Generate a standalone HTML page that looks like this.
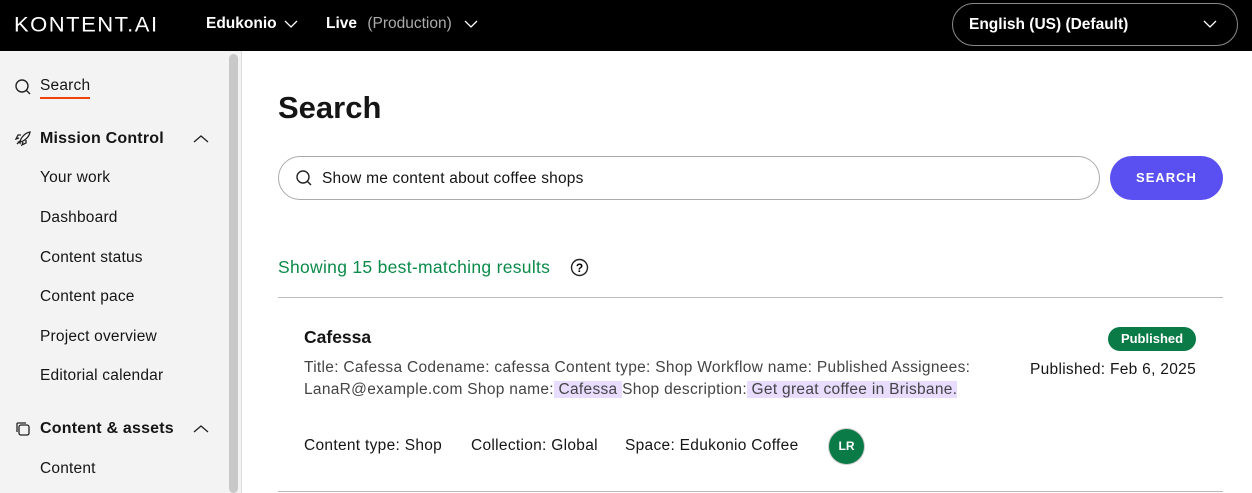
<!DOCTYPE html>
<html><head><meta charset="utf-8"><style>
*{box-sizing:border-box;margin:0;padding:0}
body{width:1252px;height:493px;overflow:hidden;font-family:"Liberation Sans",sans-serif;background:#fff;position:relative;color:#151515}
.top{position:absolute;left:0;top:0;width:1252px;height:51px;background:#000;color:#fff}
.logo{position:absolute;left:14px;top:12px;font-size:22px;letter-spacing:1.5px;font-weight:400;transform:scaleY(0.95)}
.t{position:absolute;top:15px;font-size:15.5px;font-weight:bold}
.lang{position:absolute;left:952px;top:3px;width:286px;height:43px;border:1px solid #8a8a8a;border-radius:22px;font-size:15.5px;padding:12px 16px;font-weight:bold}
.side{position:absolute;left:0;top:51px;width:242px;height:442px;background:#f3f3f3;border-right:1px solid #ddd}
.sb{position:absolute;left:229px;top:54px;width:9px;height:439px;background:#c8c8c8;border-radius:5px}
.si{position:absolute;left:40px;font-size:15.5px;letter-spacing:0.2px}
.sh{font-weight:bold;font-size:16px}
.main h1{position:absolute;left:278px;top:90px;font-size:31px;font-weight:bold}
.inp{position:absolute;left:278px;top:156px;width:822px;height:44px;border:1px solid #aaa;border-radius:22px;font-size:15.5px;padding:13px 0 0 43px;letter-spacing:0.2px}
.btn{position:absolute;left:1110px;top:156px;width:113px;height:44px;background:#5a4ff0;border-radius:22px;color:#fff;font-size:13px;font-weight:bold;text-align:center;line-height:44px;letter-spacing:1px}
.res{position:absolute;left:278px;top:257px;font-size:17.5px;color:#0b8a4a;letter-spacing:0.3px}
.hr{position:absolute;left:278px;width:945px;height:1px;background:#bbb}
.hl{background:#e8dcff}
.f{font-size:15.5px;letter-spacing:0.3px}
svg.ch{position:absolute}
</style></head><body>
<div class="top">
<div class="logo">KONTENT.AI</div>
<div class="t" style="left:206px">Edukonio</div>
<svg class="ch" style="left:283px;top:19px" width="16" height="10" viewBox="0 0 16 10"><path d="M2 2l6 6 6-6" fill="none" stroke="#fff" stroke-width="1.3"/></svg>
<div class="t" style="left:326px">Live <span style="font-weight:normal;color:#aaa;margin-left:6px">(Production)</span></div>
<svg class="ch" style="left:463px;top:19px" width="16" height="10" viewBox="0 0 16 10"><path d="M2 2l6 6 6-6" fill="none" stroke="#fff" stroke-width="1.3"/></svg>
<div class="lang">English (US) (Default)</div>
<svg class="ch" style="left:1202px;top:19px" width="16" height="10" viewBox="0 0 16 10"><path d="M2 2l6 6 6-6" fill="none" stroke="#fff" stroke-width="1.3"/></svg>
</div>
<div class="side">
<svg style="position:absolute;left:14px;top:27px" width="18" height="18" viewBox="0 0 18 18"><circle cx="8" cy="8" r="6" fill="none" stroke="#222" stroke-width="1.4"/><line x1="12.5" y1="12.5" x2="16" y2="16" stroke="#222" stroke-width="1.4"/></svg>
<div class="si" style="top:26px;border-bottom:2px solid #f0440a;padding-bottom:2px">Search</div>
<svg style="position:absolute;left:14px;top:78px" width="18" height="18" viewBox="0 0 18 18"><path d="M3 15l3-3M6 14c0-4 4-10 10-11-1 6-7 10-11 10zM5 9l-3 1 2-4h3M9 13l-1 3 4-2v-3" fill="none" stroke="#222" stroke-width="1.3"/></svg>
<div class="si sh" style="top:79px">Mission Control</div>
<svg class="ch" style="left:192px;top:83px" width="18" height="10" viewBox="0 0 18 10"><path d="M2 8l7-6 7 6" fill="none" stroke="#222" stroke-width="1.3"/></svg>
<div class="si" style="top:118px">Your work</div>
<div class="si" style="top:158px">Dashboard</div>
<div class="si" style="top:198px">Content status</div>
<div class="si" style="top:237px">Content pace</div>
<div class="si" style="top:277px">Project overview</div>
<div class="si" style="top:316px">Editorial calendar</div>
<svg style="position:absolute;left:14px;top:369px" width="18" height="18" viewBox="0 0 18 18"><rect x="5" y="5" width="10" height="10" rx="2" fill="none" stroke="#222" stroke-width="1.3"/><path d="M3 12V4a1 1 0 011-1h8" fill="none" stroke="#222" stroke-width="1.3"/></svg>
<div class="si sh" style="top:369px">Content &amp; assets</div>
<svg class="ch" style="left:192px;top:373px" width="18" height="10" viewBox="0 0 18 10"><path d="M2 8l7-6 7 6" fill="none" stroke="#222" stroke-width="1.3"/></svg>
<div class="si" style="top:409px">Content</div>
</div>
<div class="sb"></div>
<div class="main">
<h1>Search</h1>
<div class="inp">Show me content about coffee shops</div>
<svg style="position:absolute;left:295px;top:169px" width="18" height="18" viewBox="0 0 18 18"><circle cx="8" cy="8" r="6" fill="none" stroke="#222" stroke-width="1.4"/><line x1="12.5" y1="12.5" x2="16" y2="16" stroke="#222" stroke-width="1.4"/></svg>
<div class="btn">SEARCH</div>
<div class="res">Showing 15 best-matching results</div>
<svg style="position:absolute;left:570px;top:258px" width="19" height="19" viewBox="0 0 19 19"><circle cx="9.5" cy="9.5" r="8" fill="none" stroke="#222" stroke-width="1.4"/><text x="9.5" y="14" font-size="12" font-weight="bold" text-anchor="middle" font-family="Liberation Sans">?</text></svg>
<div class="hr" style="top:297px"></div>
<div style="position:absolute;left:304px;top:327px;font-size:17.5px;font-weight:bold">Cafessa</div>
<div class="f" style="position:absolute;left:304px;top:357px;width:700px;line-height:22px;color:#444">Title: Cafessa Codename: cafessa Content type: Shop Workflow name: Published Assignees: LanaR@example.com Shop name:<span class="hl"> Cafessa </span>Shop description:<span class="hl"> Get great coffee in Brisbane.</span></div>
<div style="position:absolute;left:1108px;top:327px;width:88px;height:24px;background:#0a7a46;color:#fff;border-radius:12px;font-size:13px;font-weight:bold;text-align:center;line-height:24px">Published</div>
<div class="f" style="position:absolute;right:56px;top:361px">Published: Feb 6, 2025</div>
<div class="f" style="position:absolute;left:304px;top:437px">Content type: Shop</div>
<div class="f" style="position:absolute;left:471px;top:437px">Collection: Global</div>
<div class="f" style="position:absolute;left:625px;top:437px">Space: Edukonio Coffee</div>
<div style="position:absolute;left:829px;top:429px;width:35px;height:35px;border-radius:50%;background:#0a7a46;color:#fff;font-size:12px;font-weight:bold;text-align:center;line-height:35px;box-shadow:0 0 0 1px #ccc">LR</div>
<div class="hr" style="top:491px"></div>
</div>
</body></html>
